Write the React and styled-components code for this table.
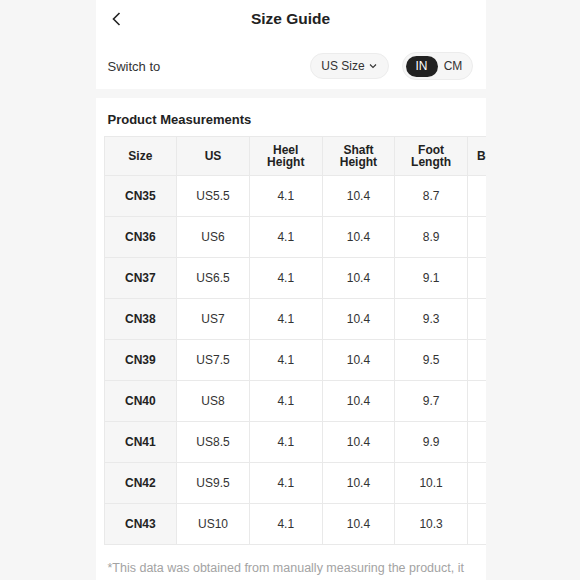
import React from "react";
import styled, { createGlobalStyle } from "styled-components";

const Global = createGlobalStyle`
  html, body { margin: 0; padding: 0; background: #f6f6f6; }
  body { font-family: "Liberation Sans", Arial, sans-serif; color: #222; }
  * { box-sizing: border-box; }
`;

const Page = styled.div`
  display: flex;
  justify-content: center;
  height: 580px;
  overflow: hidden;
  padding-left: 1px;
`;

const Column = styled.div`
  width: 390px;
  display: flex;
  flex-direction: column;
  gap: 9px;
`;

const Card = styled.section`
  background: #fff;
  overflow: hidden;
`;

const TopCard = styled(Card)`
  height: 89px;
  display: flex;
  flex-direction: column;
`;

const Header = styled.header`
  height: 38px;
  flex: none;
  display: flex;
  align-items: center;
  justify-content: center;
  position: relative;
`;

const BackButton = styled.button`
  position: absolute;
  left: 14px;
  top: 10px;
  width: 16px;
  height: 18px;
  padding: 0;
  border: 0;
  background: none;
  display: flex;
`;

const Title = styled.h1`
  margin: 0;
  font-size: 15.5px;
  font-weight: 700;
  color: #222;
`;

const SwitchRow = styled.div`
  flex: 1;
  display: flex;
  align-items: center;
  padding: 5px 13px 0 12px;
`;

const SwitchLabel = styled.span`
  flex: 1;
  font-size: 13px;
  color: #333;
`;

const SelectPill = styled.div`
  height: 26px;
  width: 79px;
  border-radius: 13px;
  background: #f6f6f6;
  border: 1px solid #ececec;
  display: flex;
  align-items: center;
  justify-content: center;
  gap: 4px;
  font-size: 12px;
  color: #333;
  margin-right: 13px;
`;

const Toggle = styled.div`
  height: 28px;
  width: 71px;
  border-radius: 14px;
  background: #f6f6f6;
  border: 1px solid #ececec;
  display: flex;
  align-items: center;
  padding: 0 3px;
`;

const ToggleOption = styled.span`
  height: 21px;
  width: ${(p) => (p.$active ? "32px" : "auto")};
  flex: ${(p) => (p.$active ? "none" : "1")};
  border-radius: 11px;
  background: ${(p) => (p.$active ? "#222" : "transparent")};
  color: ${(p) => (p.$active ? "#fff" : "#333")};
  display: flex;
  align-items: center;
  justify-content: center;
  font-size: 12px;
`;

const MeasureCard = styled(Card)`
  flex: 1;
  padding: 14px 0 0 8px;
`;

const SectionTitle = styled.h2`
  margin: 0 0 8px 4px;
  font-size: 13px;
  font-weight: 700;
  color: #222;
  line-height: 16px;
`;

const Table = styled.table`
  border-collapse: collapse;
  table-layout: fixed;
  width: ${6 * 72.7}px;
`;

const Th = styled.th`
  width: 72.7px;
  height: 39px;
  background: #f6f6f6;
  border: 1px solid #e9e9e9;
  font-size: 12px;
  font-weight: 700;
  line-height: 12.5px;
  color: #222;
  text-align: center;
  vertical-align: middle;
  padding: 0 2px;
`;

const Td = styled.td`
  height: 41px;
  border: 1px solid #e9e9e9;
  font-size: 12px;
  font-weight: ${(p) => (p.$head ? 700 : 400)};
  background: ${(p) => (p.$head ? "#f6f6f6" : "#fff")};
  color: ${(p) => (p.$head ? "#222" : "#333")};
  text-align: center;
  vertical-align: middle;
  padding: 0;
`;

const Note = styled.p`
  margin: 14px 12px 0 4px;
  font-size: 12.5px;
  line-height: 19px;
  color: #a3a3a3;
`;

const rows = [
  ["CN35", "US5.5", "4.1", "10.4", "8.7", "14.2"],
  ["CN36", "US6", "4.1", "10.4", "8.9", "14.4"],
  ["CN37", "US6.5", "4.1", "10.4", "9.1", "14.6"],
  ["CN38", "US7", "4.1", "10.4", "9.3", "14.8"],
  ["CN39", "US7.5", "4.1", "10.4", "9.5", "15.0"],
  ["CN40", "US8", "4.1", "10.4", "9.7", "15.2"],
  ["CN41", "US8.5", "4.1", "10.4", "9.9", "15.4"],
  ["CN42", "US9.5", "4.1", "10.4", "10.1", "15.6"],
  ["CN43", "US10", "4.1", "10.4", "10.3", "15.8"],
];

const headers = [
  ["Size"],
  ["US"],
  ["Heel", "Height"],
  ["Shaft", "Height"],
  ["Foot", "Length"],
  ["Boot Calf"],
];

export default function App() {
  return (
    <>
      <Global />
      <Page>
        <Column>
          <TopCard>
            <Header>
              <BackButton aria-label="Back">
                <svg width="16" height="18" viewBox="0 0 16 18">
                  <path d="M9.5 3 L3.5 9 L9.5 15" fill="none" stroke="#222" strokeWidth="1.6" />
                </svg>
              </BackButton>
              <Title>Size Guide</Title>
            </Header>
            <SwitchRow>
              <SwitchLabel>Switch to</SwitchLabel>
              <SelectPill>
                US Size
                <svg width="8" height="6" viewBox="0 0 8 6">
                  <path d="M1 1.5 L4 4.5 L7 1.5" fill="none" stroke="#333" strokeWidth="1.1" />
                </svg>
              </SelectPill>
              <Toggle>
                <ToggleOption $active>IN</ToggleOption>
                <ToggleOption>CM</ToggleOption>
              </Toggle>
            </SwitchRow>
          </TopCard>
          <MeasureCard>
            <SectionTitle>Product Measurements</SectionTitle>
            <Table>
              <thead>
                <tr>
                  {headers.map((h, i) => (
                    <Th key={i}>
                      {h.map((line, j) => (
                        <React.Fragment key={j}>
                          {j > 0 && <br />}
                          {line}
                        </React.Fragment>
                      ))}
                    </Th>
                  ))}
                </tr>
              </thead>
              <tbody>
                {rows.map((r) => (
                  <tr key={r[0]}>
                    {r.map((c, i) => (
                      <Td key={i} $head={i === 0}>
                        {c}
                      </Td>
                    ))}
                  </tr>
                ))}
              </tbody>
            </Table>
            <Note>
              *This data was obtained from manually measuring the product, it may be off by 0.39-0.79 IN.
            </Note>
          </MeasureCard>
        </Column>
      </Page>
    </>
  );
}
